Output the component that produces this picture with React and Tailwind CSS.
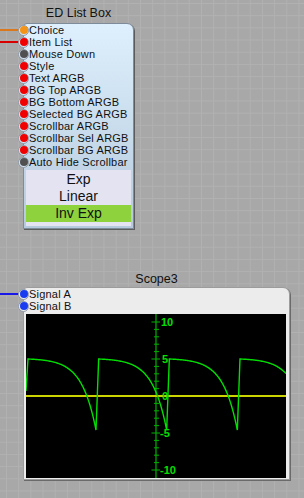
import React from "react"

const font = { fontFamily: '"Liberation Sans", Arial, sans-serif' }

const listPins = [
  ["Choice", "bg-[#f39418]"],
  ["Item List", "bg-[#f00000]"],
  ["Mouse Down", "bg-[#505050]"],
  ["Style", "bg-[#f00000]"],
  ["Text ARGB", "bg-[#f00000]"],
  ["BG Top ARGB", "bg-[#f00000]"],
  ["BG Bottom ARGB", "bg-[#f00000]"],
  ["Selected BG ARGB", "bg-[#f00000]"],
  ["Scrollbar ARGB", "bg-[#f00000]"],
  ["Scrollbar Sel ARGB", "bg-[#f00000]"],
  ["Scrollbar BG ARGB", "bg-[#f00000]"],
  ["Auto Hide Scrollbar", "bg-[#505050]"],
]

function Pin({ label, dot, bump }) {
  return (
    <div className="relative h-[12px] flex items-center pl-[5px] text-[11px] leading-[12px] tracking-[0.2px] text-[#111]">
      <span className={`absolute left-[-6px] top-[0.5px] w-[11px] h-[11px] rounded-full border border-[#8e9aa6] ${bump}`} />
      <span className={`absolute left-[-4px] top-[2px] w-[8px] h-[8px] rounded-full ${dot}`} />
      <span className="relative">{label}</span>
    </div>
  )
}

function wavePath() {
  const pts = [[0, 77]]
  const starts = [2, 72.67, 143.33, 214]
  const k = Math.exp(4.8) - 1
  for (const s of starts) {
    for (let i = 0; i <= 68; i++) {
      const x = s + i
      if (x > 260) break
      const t = i / 68
      const v = 5 - 9.6 * (Math.exp(4.8 * t) - 1) / k
      pts.push([x, 82 - v * 7.4])
    }
  }
  return "M" + pts.map(([x, y]) => `${x.toFixed(2)},${y.toFixed(2)}`).join(" L")
}

function Plot() {
  const ticks = []
  for (let u = -10; u <= 10; u++) {
    const y = 82 - u * 7.4
    const major = u % 5 === 0
    ticks.push(<line key={u} x1={major ? 125.5 : 128} x2={major ? 134 : 133} y1={y} y2={y} stroke="#00b000" strokeWidth="1" />)
  }
  const labels = [["10", 135, 12], ["5", 136, 49], ["0", 136, 86], ["-5", 134, 123], ["-10", 134, 160]]
  return (
    <svg width="260" height="164" className="block bg-black">
      <line x1="130" x2="130" y1="0" y2="164" stroke="#00b000" strokeWidth="1.2" />
      {ticks}
      <line x1="0" x2="260" y1="82" y2="82" stroke="#ccd400" strokeWidth="2" />
      <path d={wavePath()} fill="none" stroke="#00e000" strokeWidth="1.4" />
      {labels.map(([t, x, y]) => (
        <text key={t} x={x} y={y} fill="#00e000" fontSize="11" fontWeight="bold" fontFamily='"Liberation Sans", Arial, sans-serif'>{t}</text>
      ))}
    </svg>
  )
}

export default function App() {
  return (
    <div
      className="relative w-[304px] h-[498px] overflow-hidden bg-[#a8a8a8] bg-[linear-gradient(to_right,#b1b1b1_1px,transparent_1px),linear-gradient(to_bottom,#b1b1b1_1px,transparent_1px)] bg-[size:12.2px_12.2px] bg-[position:6px_3px]"
      style={font}
    >
      {/* wires */}
      <div className="absolute left-0 top-[29px] w-[21px] h-[2px] bg-[#d9781c]" />
      <div className="absolute left-0 top-[41px] w-[21px] h-[2px] bg-[#d80000]" />
      <div className="absolute left-0 top-[293px] w-[21px] h-[2px] bg-[#1818e8]" />

      {/* ED List Box node */}
      <div className="absolute left-[23px] top-[6px] w-[111px] flex flex-col">
        <div className="text-center text-[12.5px] leading-[14px] text-[#111]">ED List Box</div>
        <div className="mt-[3px] h-[206px] flex flex-col border border-[#7e8c9a] rounded-tr-[7px] rounded-tl-[4px] bg-[linear-gradient(to_bottom,#def0fd,#b6cadd)] shadow-[1px_1px_0_#5c5c5c]">
          <div className="flex flex-col">
            {listPins.map(([l, c]) => (
              <Pin key={l} label={l} dot={c} bump="bg-[#d4e4f2]" />
            ))}
          </div>
          <div className="mt-[2px] mx-[2px] flex flex-col bg-[#e3e3f1] pt-[1px] pb-[4px] text-[14px] leading-[17px] text-[#111]">
            <div className="h-[17px] text-center">Exp</div>
            <div className="h-[17px] text-center">Linear</div>
            <div className="h-[17px] text-center bg-[#8ed23e]">Inv Exp</div>
          </div>
        </div>
      </div>

      {/* Scope3 node */}
      <div className="absolute left-[23px] top-[272px] w-[267px] flex flex-col">
        <div className="text-center text-[12.5px] leading-[14px] text-[#111]">Scope3</div>
        <div className="mt-[1px] flex flex-col border border-[#9c9c9c] rounded-tr-[7px] rounded-tl-[4px] bg-[#ececec] shadow-[1px_1px_0_#6a6a6a]">
          <Pin label="Signal A" dot="bg-[#1a3cf0]" bump="bg-[#ececec]" />
          <Pin label="Signal B" dot="bg-[#1a3cf0]" bump="bg-[#ececec]" />
          <div className="mt-[2px] ml-[2px] mb-[1px]">
            <Plot />
          </div>
        </div>
      </div>
    </div>
  )
}
